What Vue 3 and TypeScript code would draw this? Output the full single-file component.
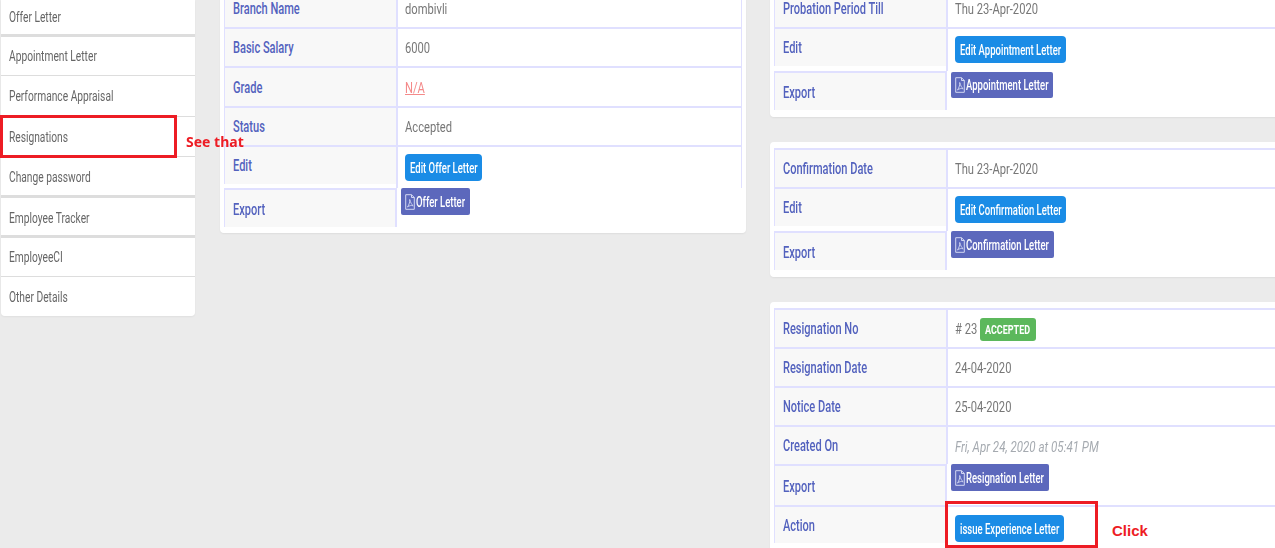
<script setup lang="ts">
interface Row {
  label: string
  h: number
  value?: string
  kind?: 'link' | 'muted' | 'badge' | 'edit' | 'export' | 'action'
  btn?: string
  w?: number
}
const menu = [
  { t: 'Offer Letter', h: 37, thick: true },
  { t: 'Appointment Letter', h: 39 },
  { t: 'Performance Appraisal', h: 41 },
  { t: 'Resignations', h: 40 },
  { t: 'Change password', h: 41, thick: true },
  { t: 'Employee Tracker', h: 40, thick: true },
  { t: 'EmployeeCI', h: 39 },
  { t: 'Other Details', h: 39 },
]
const offer: Row[] = [
  { label: 'Branch Name', value: 'dombivli', h: 39 },
  { label: 'Basic Salary', value: '6000', h: 39 },
  { label: 'Grade', value: 'N/A', kind: 'link', h: 40 },
  { label: 'Status', value: 'Accepted', h: 39 },
  { label: 'Edit', kind: 'edit', btn: 'Edit Offer Letter', w: 77, h: 43 },
  { label: 'Export', kind: 'export', btn: 'Offer Letter', w: 69, h: 39 },
]
const appoint: Row[] = [
  { label: 'Probation Period Till', value: 'Thu 23-Apr-2020', h: 39 },
  { label: 'Edit', kind: 'edit', btn: 'Edit Appointment Letter', w: 111, h: 44 },
  { label: 'Export', kind: 'export', btn: 'Appointment Letter', w: 102, h: 39 },
]
const confirm: Row[] = [
  { label: 'Confirmation Date', value: 'Thu 23-Apr-2020', h: 39 },
  { label: 'Edit', kind: 'edit', btn: 'Edit Confirmation Letter', w: 111, h: 44 },
  { label: 'Export', kind: 'export', btn: 'Confirmation Letter', w: 103, h: 39 },
]
const resign: Row[] = [
  { label: 'Resignation No', kind: 'badge', value: '# 23', h: 39 },
  { label: 'Resignation Date', value: '24-04-2020', h: 39 },
  { label: 'Notice Date', value: '25-04-2020', h: 39 },
  { label: 'Created On', kind: 'muted', value: 'Fri, Apr 24, 2020 at 05:41 PM', h: 39 },
  { label: 'Export', kind: 'export', btn: 'Resignation Letter', w: 98, h: 41 },
  { label: 'Action', kind: 'action', btn: 'issue Experience Letter', w: 109, h: 38 },
]
const second = [
  { rows: appoint, cls: 'c-a' },
  { rows: confirm, cls: 'c-b' },
  { rows: resign, cls: 'c-c' },
]
</script>

<template>
  <div class="page">
    <nav class="side">
      <div v-for="m in menu" :key="m.t" class="mi" :class="{ thick: m.thick }" :style="{ height: m.h + 'px' }">
        <span class="sq">{{ m.t }}</span>
      </div>
    </nav>

    <section class="col one">
      <div class="card c-o">
        <div v-for="r in offer" :key="r.label" class="row" :class="'k-' + r.kind" :style="{ height: r.h + 'px' }">
          <div class="lab"><span class="sq">{{ r.label }}</span></div>
          <div class="val">
            <a v-if="r.kind === 'link'" class="sq link">{{ r.value }}</a>
            <span v-else-if="r.value" class="sq">{{ r.value }}</span>
            <div v-if="r.kind === 'edit'" class="btn blue" :style="{ width: r.w + 'px' }"><span class="sq bt">{{ r.btn }}</span></div>
            <div v-if="r.kind === 'export'" class="btn indigo" :style="{ width: r.w + 'px' }">
              <svg class="pdf" viewBox="0 0 10 16" width="10" height="16"><path d="M.7.7H6.500L9.300 3.500V15.300H.7z M6.500 .7V3.500H9.300" fill="none" stroke="#d3d7f2" stroke-width="1"/><path d="M2.500 13C4.300 10.500 5 7.500 4.700 5.500 5.400 8 6.600 10.800 8.200 11.800 6.200 11.200 4.200 11.600 2.500 13z" fill="none" stroke="#d3d7f2" stroke-width=".9"/></svg>
              <span class="sq bt">{{ r.btn }}</span>
            </div>
          </div>
        </div>
      </div>
    </section>

    <section class="col two">
      <div v-for="c in second" :key="c.cls" class="card" :class="c.cls">
        <div v-for="r in c.rows" :key="r.label" class="row" :class="'k-' + r.kind" :style="{ height: r.h + 'px' }">
          <div class="lab"><span class="sq">{{ r.label }}</span></div>
          <div class="val">
            <span v-if="r.value" class="sq num">{{ r.value }}</span>
            <span v-if="r.kind === 'badge'" class="badge"><span class="sq bd">ACCEPTED</span></span>
            <div v-if="r.kind === 'edit' || r.kind === 'action'" class="btn blue" :style="{ width: r.w + 'px' }"><span class="sq bt">{{ r.btn }}</span></div>
            <div v-if="r.kind === 'export'" class="btn indigo" :style="{ width: r.w + 'px' }">
              <svg class="pdf" viewBox="0 0 10 16" width="10" height="16"><path d="M.7.7H6.500L9.300 3.500V15.300H.7z M6.500 .7V3.500H9.300" fill="none" stroke="#d3d7f2" stroke-width="1"/><path d="M2.500 13C4.300 10.500 5 7.500 4.700 5.500 5.400 8 6.600 10.800 8.200 11.800 6.200 11.200 4.200 11.600 2.500 13z" fill="none" stroke="#d3d7f2" stroke-width=".9"/></svg>
              <span class="sq bt">{{ r.btn }}</span>
            </div>
          </div>
        </div>
      </div>
    </section>

    <div class="mark mark-a"></div>
    <div class="note note-a">See that</div>
    <div class="mark mark-b"></div>
    <div class="note note-b">Click</div>
  </div>
</template>

<style>
html, body { margin: 0; background: #eaeaea; overflow: hidden; }
</style>

<style scoped>
.page {
  position: relative;
  display: flex;
  align-items: flex-start;
  width: 1275px;
  height: 548px;
  overflow: hidden;
  background: #ebebeb;
  font-family: Roboto, "Liberation Sans", sans-serif;
  font-size: 16px;
  color: #777;
}
.sq {
  display: inline-block;
  transform: scaleX(0.69);
  transform-origin: left center;
  white-space: nowrap;
}
.side, .col { filter: blur(0.3px); }
.side {
  width: 194px;
  margin-left: 1px;
  flex: none;
  background: #fff;
  border-radius: 0 0 4px 4px;
  box-shadow: 0 1px 2px rgba(0, 0, 0, .05);
}
.mi {
  box-sizing: border-box;
  display: flex;
  align-items: center;
  padding-left: 8px;
  border-bottom: 1px solid #ddd;
  font-size: 14px;
  color: #666;
}
.mi .sq { transform: scaleX(0.73); }
.mi.thick { border-bottom: 3px solid #ddd; }
.mi.thick:not(:first-child) { padding-top: 2px; }
.mi:last-child { border-bottom: 0; }
.col { flex: none; display: flex; flex-direction: column; }
.one { width: 526px; margin-left: 25px; margin-top: -12px; }
.two { width: 560px; margin-left: 24px; margin-top: -12px; gap: 25px; }
.card {
  background: #fff;
  border-radius: 4px;
  padding: 0 4px 6px;
  box-shadow: 0 1px 2px rgba(0, 0, 0, .06);
}
.c-a, .c-b { padding-bottom: 7px; }
.c-b, .c-c { padding-top: 6px; }
.c-c { padding-bottom: 20px; }
.row { display: flex; }
.lab {
  box-sizing: border-box;
  width: 172px;
  flex: none;
  display: flex;
  align-items: center;
  padding-left: 8px;
  background: #f8f8f8;
  border-top: 2px solid #e0e0ff;
  border-left: 1px solid #e0e0ff;
  color: #5362be;
  font-weight: 500;
}
.val {
  box-sizing: border-box;
  flex: 1;
  display: flex;
  align-items: center;
  padding-left: 7px;
  padding-top: 1px;
  border-top: 2px solid #e0e0ff;
  border-left: 2px solid #e0e0ff;
  border-right: 1px solid #e0e0ff;
  font-size: 15px;
}
.val > .sq { transform: scaleX(0.745); }
.k-edit .lab { height: 39px; }
.k-edit .val { align-items: flex-start; padding-top: 7px; }
.k-export .lab { border-right: 2px solid #e0e0ff; width: 173px; padding-top: 2px; }
.k-export .val { border: 0; align-items: flex-start; padding-left: 4px; padding-top: 0; }
.k-action .val { align-items: flex-start; padding-top: 8px; }
.k-muted .val { color: #a5aab0; font-style: italic; padding-top: 3px; font-size: 15.500px; }
.link { color: #f48a8a; text-decoration: underline; }
.btn {
  box-sizing: border-box;
  height: 27px;
  display: flex;
  align-items: center;
  padding-left: 5px;
  color: #fff;
  flex: none;
  font-size: 14px;
  font-weight: 500;
}
.blue { background: #1a8ce6; border-radius: 4px; }
.indigo { background: #5c68bc; border-radius: 2px; padding-left: 4px; gap: 1px; }
.c-a .indigo { margin-top: 1px; height: 26px; }
.pdf { flex: none; }
.btn .bt { transform: scaleX(0.68); }
.badge {
  box-sizing: border-box;
  width: 56px;
  height: 23px;
  margin-left: -5px;
  display: flex;
  align-items: center;
  padding-left: 5px;
  background: #5cb85c;
  border-radius: 3px;
  color: #fff;
  font-size: 12.500px;
  font-weight: 700;
  flex: none;
}
.badge .bd { transform: scaleX(0.72); }
.mark { position: absolute; box-sizing: border-box; border: 3px solid #ed1c24; }
.mark-a { left: 0; top: 115px; width: 177px; height: 43px; }
.mark-b { left: 945px; top: 501px; width: 153px; height: 47px; }
.note { position: absolute; color: #ed1c24; font-weight: 700; }
.note-a { left: 186px; top: 132px; font-family: "Noto Sans", sans-serif; font-size: 14px; }
.note-b { left: 1112px; top: 522px; font-family: "Liberation Sans", sans-serif; font-size: 15px; }
</style>
